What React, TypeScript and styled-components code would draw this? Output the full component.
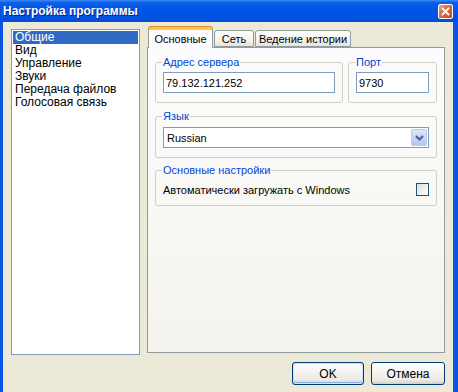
import React from "react";
import styled, { createGlobalStyle } from "styled-components";

const Global = createGlobalStyle`
  html, body { margin: 0; padding: 0; overflow: hidden; background: #ECE9D8; }
  * { box-sizing: border-box; }
`;

const FONT = `Tahoma, "Liberation Sans", "DejaVu Sans", sans-serif`;

const Window = styled.div`
  width: 458px;
  height: 392px;
  display: flex;
  flex-direction: column;
  background: #0A54E3;
  font-family: ${FONT};
  font-size: 11px;
  color: #000;
`;

const TitleBar = styled.div`
  height: 22px;
  flex: none;
  display: flex;
  align-items: center;
  justify-content: space-between;
  padding: 0 5px 0 3px;
  background: linear-gradient(180deg, #3B8CF5 0%, #0B5DE8 12%, #0055E5 50%, #0052DE 85%, #0A4AD0 100%);
`;

const Title = styled.div`
  color: #fff;
  font-weight: bold;
  font-size: 12px;
  text-shadow: 1px 1px 0 #0A1E8C;
`;

const CloseButton = styled.div`
  width: 15px;
  height: 15px;
  border: 1px solid #fff;
  border-radius: 2px;
  background: linear-gradient(135deg, #F0A080 0%, #DD6A45 45%, #C84A22 100%);
  display: flex;
  align-items: center;
  justify-content: center;
`;

const Client = styled.div`
  flex: 1;
  display: flex;
  flex-direction: column;
  margin: 0 5px 0 3px;
  background: #ECE9D8;
  padding: 5px 8px 0 8px;
`;

const Body = styled.div`
  display: flex;
  gap: 7px;
  align-items: flex-start;
`;

const ListBox = styled.div`
  width: 129px;
  height: 326px;
  margin-top: 2px;
  background: #fff;
  border: 1px solid #7F9DB9;
  padding: 1px;
  display: flex;
  flex-direction: column;
  font-size: 12px;
`;

const ListItem = styled.div<{ $selected?: boolean }>`
  height: 13px;
  line-height: 13px;
  padding-left: 2px;
  white-space: nowrap;
  background: ${(p) => (p.$selected ? "#316AC5" : "transparent")};
  color: ${(p) => (p.$selected ? "#fff" : "#000")};
`;

const TabControl = styled.div`
  width: 298px;
  height: 326px;
  display: flex;
  flex-direction: column;
`;

const TabStrip = styled.div`
  height: 20px;
  flex: none;
  display: flex;
  align-items: flex-end;
  padding-left: 1px;
  gap: 1px;
`;

const Tab = styled.div<{ $active?: boolean; $w: number }>`
  width: ${(p) => p.$w}px;
  height: ${(p) => (p.$active ? 21 : 17)}px;
  margin-bottom: ${(p) => (p.$active ? -1 : 0)}px;
  position: relative;
  z-index: ${(p) => (p.$active ? 2 : 1)};
  border: 1px solid #919B9C;
  border-bottom: ${(p) => (p.$active ? "none" : "1px solid #919B9C")};
  border-top: ${(p) => (p.$active ? "3px solid #FFC83C" : "1px solid #919B9C")};
  border-radius: 3px 3px 0 0;
  background: ${(p) =>
    p.$active ? "#FCFCFE" : "linear-gradient(180deg, #FFFFFF 0%, #F4F3EE 60%, #E6E4DA 100%)"};
  box-shadow: ${(p) => (p.$active ? "0 -1px 0 #E68B2C" : "none")};
  display: flex;
  align-items: center;
  justify-content: center;
  padding-top: ${(p) => (p.$active ? 0 : 1)}px;
  white-space: nowrap;
`;

const Panel = styled.div`
  flex: 1;
  border: 1px solid #919B9C;
  background: linear-gradient(180deg, #FCFCFE 0%, #F7F7F3 60%, #F4F3EE 100%);
  padding: 8px 7px 0 7px;
  display: flex;
  flex-direction: column;
  align-items: stretch;
`;

const Row = styled.div`
  display: flex;
  gap: 5px;
`;

const Group = styled.fieldset<{ $w?: number; $grow?: boolean; $mt?: number; $pt: number }>`
  margin: ${(p) => p.$mt ?? 0}px 0 0 0;
  flex: ${(p) => (p.$grow ? "1 1 0" : "none")};
  ${(p) => (p.$w ? `width: ${p.$w}px;` : "")}
  min-width: 0;
  border: 1px solid #D0D0BF;
  border-radius: 3px;
  padding: ${(p) => p.$pt}px 7px 9px 7px;
`;

const Legend = styled.legend`
  color: #0046D5;
  line-height: 13px;
  padding: 0 1px;
  margin-left: -1px;
  font-size: 11px;
`;

const TextInput = styled.div`
  height: 21px;
  border: 1px solid #7F9DB9;
  background: #fff;
  display: flex;
  align-items: center;
  padding-left: 2px;
`;

const Combo = styled.div`
  height: 21px;
  border: 1px solid #7F9DB9;
  background: #fff;
  display: flex;
  align-items: center;
  justify-content: space-between;
  padding: 1px;
  padding-left: 3px;
`;

const DropButton = styled.div`
  width: 16px;
  height: 17px;
  border: 1px solid #B9CBF3;
  border-radius: 2px;
  background: linear-gradient(180deg, #DCE6FD 0%, #C6D6FB 50%, #B4C8F6 100%);
  display: flex;
  align-items: center;
  justify-content: center;
`;

const CheckRow = styled.div`
  height: 13px;
  display: flex;
  align-items: center;
  justify-content: space-between;
`;

const CheckBox = styled.div`
  width: 13px;
  height: 13px;
  border: 1px solid #1C5180;
  background: linear-gradient(135deg, #DCDCD7 0%, #F2F2EE 60%, #FFFFFF 100%);
`;

const ButtonRow = styled.div`
  display: flex;
  justify-content: flex-end;
  gap: 7px;
  margin-top: 7px;
`;

const Button = styled.div<{ $w: number; $default?: boolean }>`
  width: ${(p) => p.$w}px;
  height: 23px;
  border: 1px solid #003C74;
  border-radius: 3px;
  background: linear-gradient(180deg, #FFFFFF 0%, #F4F4F0 40%, #ECEBE6 80%, #D6D0C5 100%);
  box-shadow: ${(p) =>
    p.$default ? "inset 0 0 0 1px #CEE7FF, inset 0 -1px 0 1px #89ADE4" : "inset 0 -1px 0 #D6D0C5"};
  display: flex;
  align-items: center;
  justify-content: center;
  font-size: 12px;
`;

const items = ["Общие", "Вид", "Управление", "Звуки", "Передача файлов", "Голосовая связь"];

export default function App() {
  return (
    <>
      <Global />
      <Window>
        <TitleBar>
          <Title>Настройка программы</Title>
          <CloseButton>
            <svg width="9" height="9" viewBox="0 0 9 9">
              <path d="M1.5 1.5 L7.5 7.5 M7.5 1.5 L1.5 7.5" stroke="#fff" strokeWidth="1.8" strokeLinecap="square" />
            </svg>
          </CloseButton>
        </TitleBar>
        <Client>
          <Body>
            <ListBox>
              {items.map((it, i) => (
                <ListItem key={it} $selected={i === 0}>
                  {it}
                </ListItem>
              ))}
            </ListBox>
            <TabControl>
              <TabStrip>
                <Tab $active $w={65}>Основные</Tab>
                <Tab $w={40}>Сеть</Tab>
                <Tab $w={96}>Ведение истории</Tab>
              </TabStrip>
              <Panel>
                <Row>
                  <Group $grow $pt={3}>
                    <Legend>Адрес сервера</Legend>
                    <TextInput>79.132.121.252</TextInput>
                  </Group>
                  <Group $w={89} $pt={3}>
                    <Legend>Порт</Legend>
                    <TextInput>9730</TextInput>
                  </Group>
                </Row>
                <Group $mt={7} $pt={4}>
                  <Legend>Язык</Legend>
                  <Combo>
                    <span>Russian</span>
                    <DropButton>
                      <svg width="9" height="6" viewBox="0 0 9 6">
                        <path d="M1 1 L4.5 4.5 L8 1" stroke="#4D6185" strokeWidth="2" fill="none" />
                      </svg>
                    </DropButton>
                  </Combo>
                </Group>
                <Group $mt={6} $pt={6}>
                  <Legend>Основные настройки</Legend>
                  <CheckRow>
                    <span>Автоматически загружать с Windows</span>
                    <CheckBox />
                  </CheckRow>
                </Group>
              </Panel>
            </TabControl>
          </Body>
          <ButtonRow>
            <Button $w={72} $default>OK</Button>
            <Button $w={74}>Отмена</Button>
          </ButtonRow>
        </Client>
      </Window>
    </>
  );
}
